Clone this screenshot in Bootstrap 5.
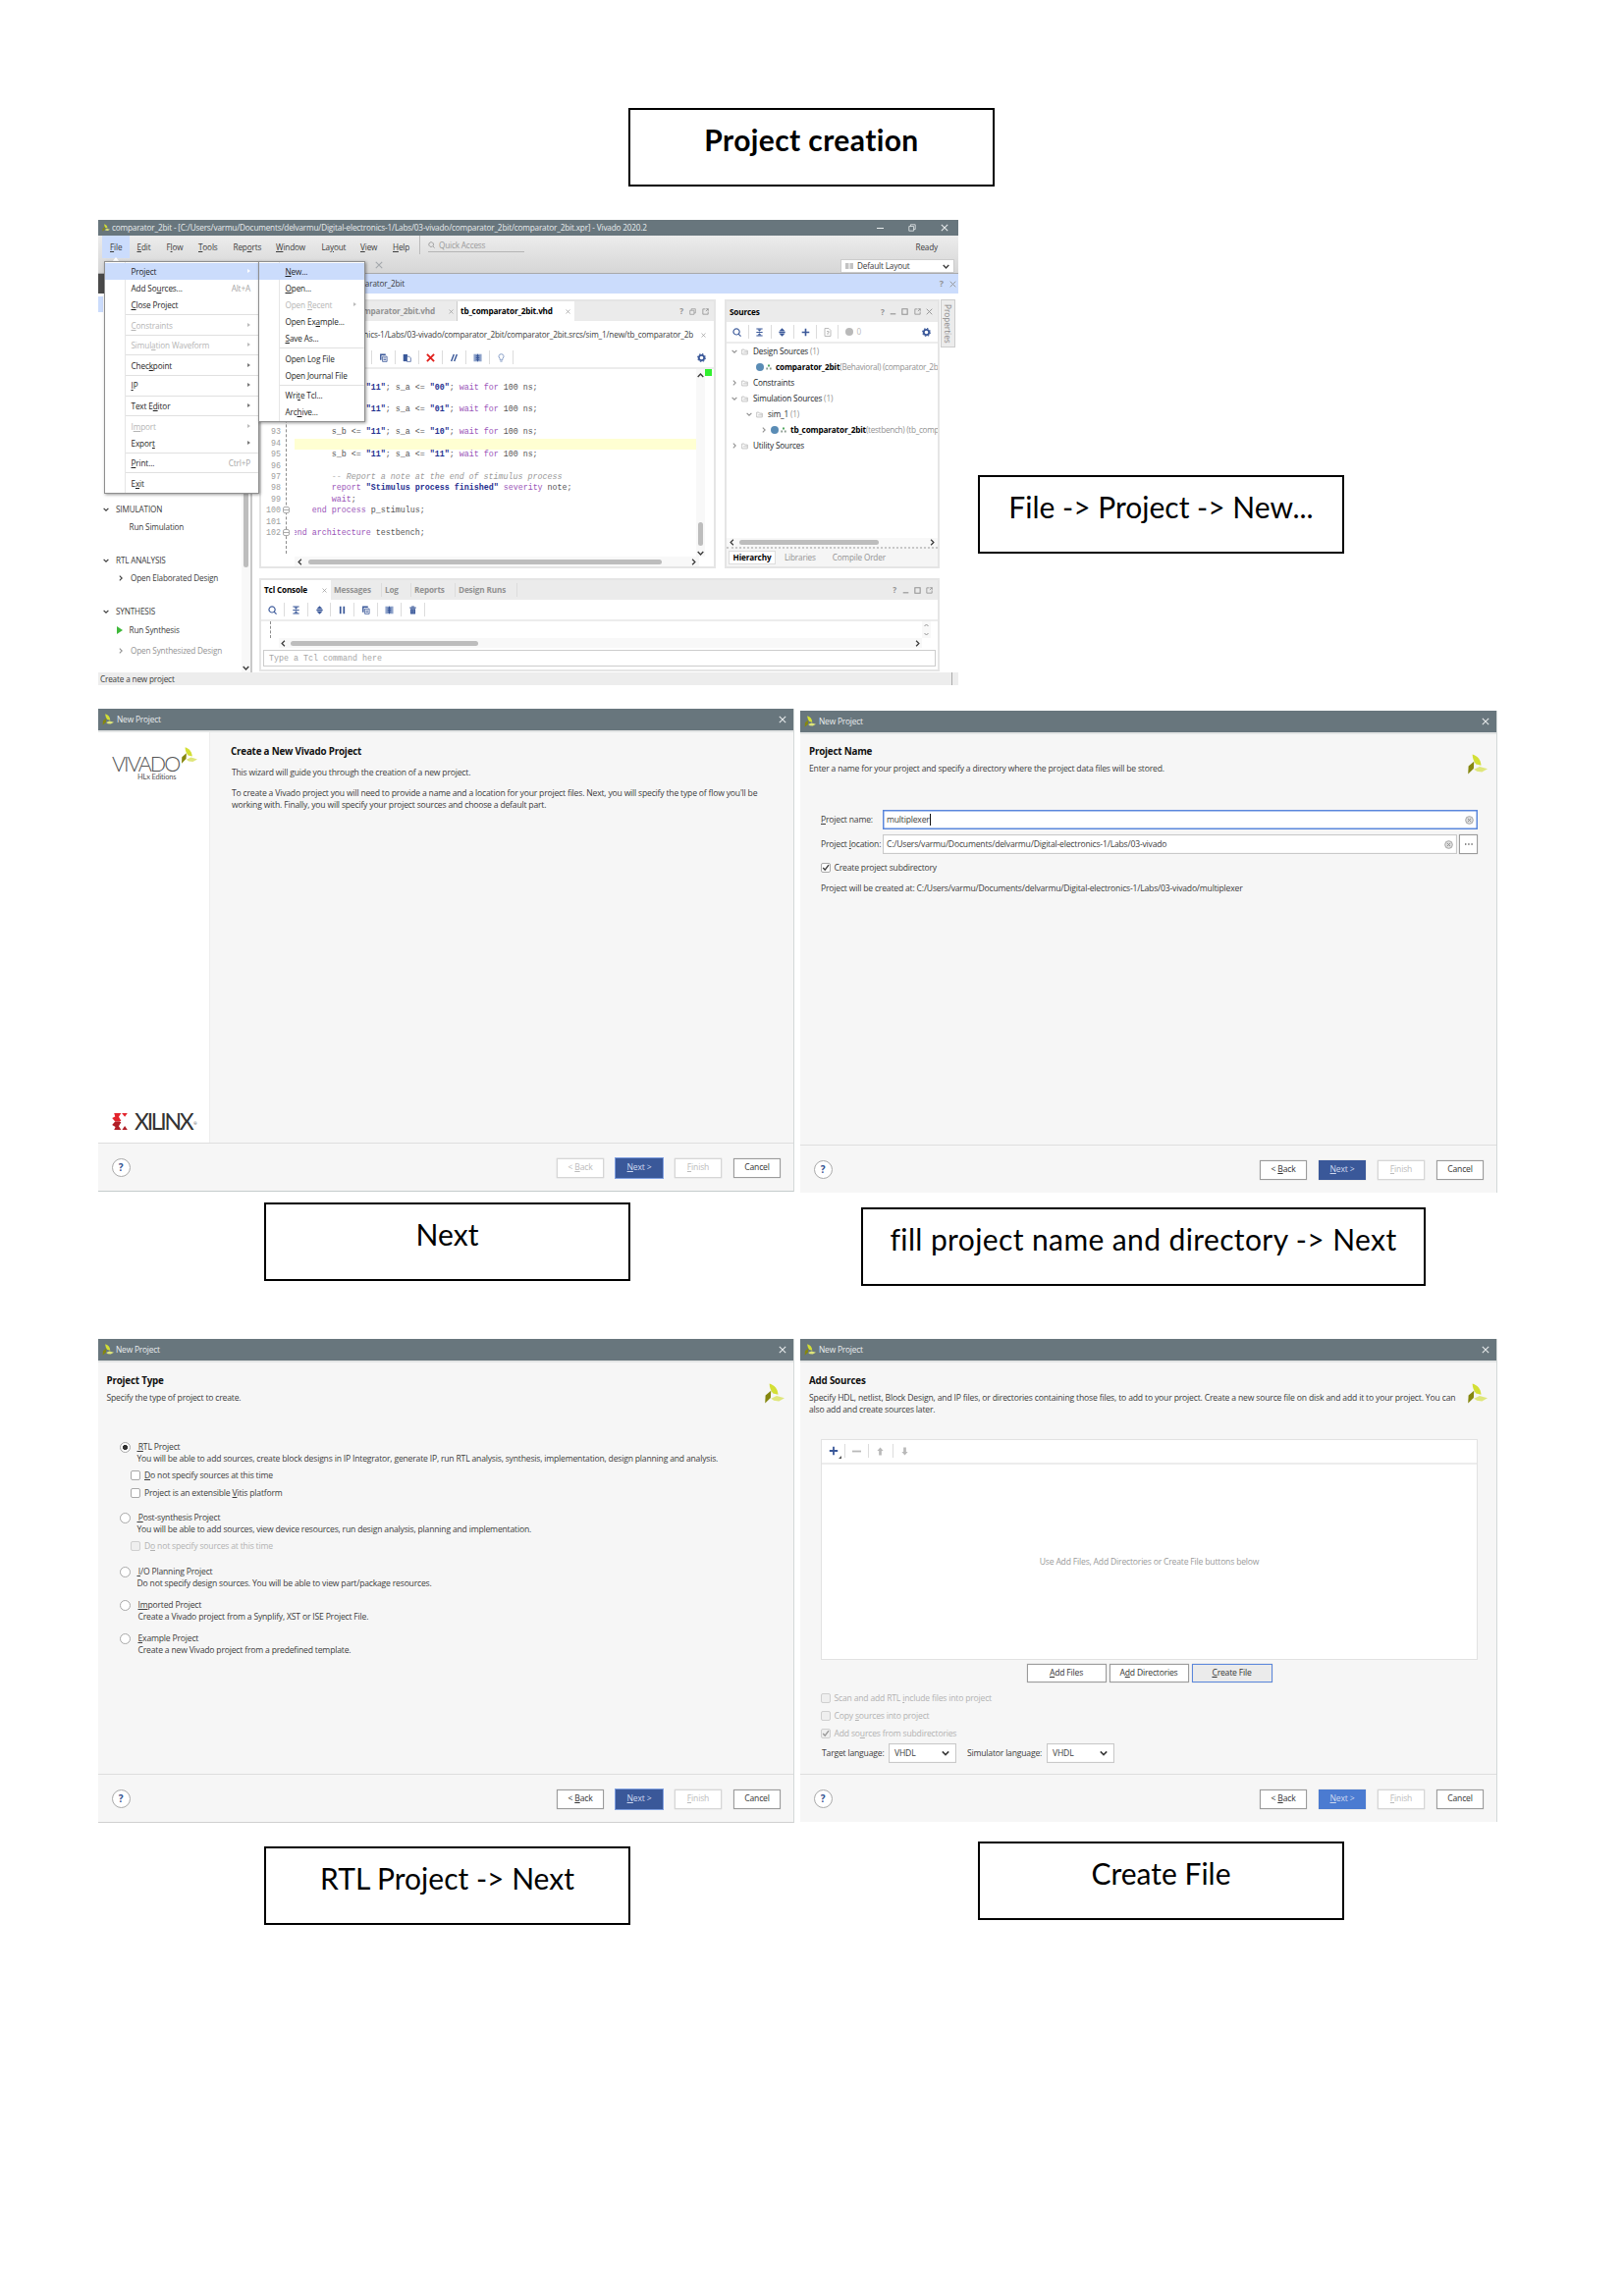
<!DOCTYPE html>
<html lang="en">
<head>
<meta charset="utf-8">
<title>Project creation</title>
<meta name="viewport" content="width=device-width, initial-scale=1">
<link rel="stylesheet" href="https://cdn.jsdelivr.net/npm/bootstrap@5.3.0/dist/css/bootstrap.min.css">
<style>
body{width:1654px;height:2339px;background:#fff;color:#3c3c3c;font-family:"Open Sans","Noto Sans",sans-serif;font-size:8.6px;line-height:12px;overflow:hidden}
svg{display:block;flex:none}
u{text-underline-offset:1px;text-decoration-thickness:.7px}
.sheet{padding:110px 0 0 100px}
.caption-box{border:2px solid #000;height:80px;width:373px;color:#000;font-family:Lato,"Liberation Sans",sans-serif;font-size:30px;line-height:34px;padding-top:13px;text-align:center;white-space:nowrap;font-variant-ligatures:none}
.caption-box.wide-set{letter-spacing:.39px}
.ttl{background:#68767d;color:#e9eced;flex:none}
/* main window */
.ide{width:876px;height:474px;background:#fff;font-size:8.2px;letter-spacing:-.16px;white-space:nowrap;overflow:hidden}
.ide .ttl{height:16px;padding:0 10px 0 4px}
.menubar{height:39px;background:linear-gradient(#ececec,#d6d6d6);border-bottom:1px solid #a9a9a9;flex:none}
.menubar .it{height:23px;line-height:23px;flex:none}
.quick{border-bottom:1px solid #b5b5b5;width:98px;height:14px;color:#9a9a9a}
.combo{background:#fff;border:1px solid #ccc}
.crumb{height:20px;background:#cbdcfc;flex:none}
.flow{width:157px;border-right:2px solid #c9c9c9;flex:none}
.flow .ln{height:12px}
.sb{background:#f8f8f8;flex:none}
.thumb{background:#bdbdbd;border-radius:3px}
.pane{border:2px solid #e5e5e5;background:#fff;overflow:hidden;flex:none}
.pane .hd{background:#ebebeb;flex:none}
.gr{color:#929292}
.tb{border-bottom:2px solid #ececec;flex:none}
.vs{width:1px;height:14px;background:#dcdcdc;flex:none}
.code{font-family:"Liberation Mono",monospace;font-size:8.33px;line-height:11.43px;letter-spacing:0;color:#555;white-space:pre}
.code i{color:#9a9a9a}.code b{color:#1f2f8f}.code s{color:#9a55b8;text-decoration:none}
.code.no{color:#9d9d9d;text-align:right;width:20px;flex:none}
.code .cur{background:#ffffd2}
.fold{width:1px;border-left:1px dashed #8c8c8c;flex:none}
.fold span{position:absolute;left:-4px;width:7px;height:7px;border:1px solid #aaa;border-radius:2px;background:linear-gradient(#fff 2px,#aaa 2px 3px,#fff 3px)}
.pop{position:absolute;background:linear-gradient(90deg,#fff 20px,#e6e6e6 20px 21px,#fff 21px);border:1px solid #8f8f8f;box-shadow:1px 1px 3px rgba(0,0,0,.4);color:#1e1e1e;padding-top:1px;letter-spacing:-.13px}
.pop div{height:17px;line-height:17px;padding-left:26.5px;padding-right:8px}
.pop div.sp{border-top:1px solid #e0e0e0;height:1px;margin:1.3px 0 1.3px 21px;padding:0}
.pop .on{background:#cbdcfc}.pop .off{color:#b5b5b5}
.pop em{font-style:normal;color:#a5a5a5;float:right}
.ar::after{content:"";float:right;margin-top:6px;border-left:3px solid #777;border-top:2.2px solid transparent;border-bottom:2.2px solid transparent}
.off.ar::after{border-left-color:#bbb}.on.ar::after{border-left-color:#fff}
.tree>div{height:16px}
.stat{height:13px;background:#ededed;flex:none;line-height:13px}
.side-tab{writing-mode:vertical-rl;background:#ececec;border:1px solid #ccc;width:15px;height:49px;line-height:13px;color:#888;text-align:center;letter-spacing:0;flex:none}
/* wizard windows */
.wiz{width:709px;background:#f6f6f6;white-space:nowrap;border-right:1px solid #d3d8d8;letter-spacing:-.19px}
.wiz .ttl{height:22px;padding:0 7px 0 4px;font-size:8.4px}
.wiz .rim{height:2px;background:#e3e5e5;flex:none}
.wiz h6{font-size:9.8px;line-height:12px;font-weight:700;color:#111;margin:0;letter-spacing:-.2px}
.foot{height:49px;border-top:1px solid #dedede;padding:15px 13px 0 13.5px;flex:none}
.hlp{width:19px;height:19px;border:1px solid #aaa;border-radius:50%;background:#fff;color:#34518f;font-weight:700;font-size:10px;line-height:17px;text-align:center}
.bt{width:48px;height:19.5px;border:1px solid #9b9b9b;background:#fff;color:#333;text-align:center;line-height:17.5px;box-shadow:0 0 1px #bbb}
.bt.dis{border-color:#d6d6d6;color:#bbb}
.bt.pri{background:#3a5899;border-color:#3a5899;color:#cfd9f0}
.bt.pri.lit{background:#4b7bd1;border-color:#4b7bd1}
.bt.foc{outline:1.5px solid #7f9fe0;outline-offset:0}
.inp{border:1px solid #c9c9c9;background:#fff;height:20px;padding:0 3px;box-shadow:inset 0 0 1px #ccc}
.inp.foc{border:1px solid #5b87dc;box-shadow:inset 0 0 0 .5px #5b87dc}
.cb{width:10px;height:10px;border:1px solid #a8a8a8;border-radius:2px;background:#fff;flex:none}
.cb.dis{border-color:#cfcfcf;background:#efefef}
.rd{width:11px;height:11px;border:1px solid #a8a8a8;border-radius:50%;background:#fff;flex:none;margin-top:1px}
.rd.sel{background:radial-gradient(circle,#333 0 2.3px,#fff 2.9px)}
.dis{color:#b2b2b2}
.brand{font-family:Lato,"Open Sans",sans-serif;font-weight:300;color:#555}
</style>
</head>
<body>
<svg width="0" height="0" class="position-absolute">
<symbol id="leaf" viewBox="0 0 52 50"><path fill="#d3df35" d="M14 0C28 5 34 12 36 28L23 25C17 17 14 10 14 0Z"/><path fill="#85870f" d="M4 30L18 18 17 36 3 50Z"/><path fill="#dfe67b" d="M18 38L32 31 52 37 38 45 25 43Z"/></symbol>
<symbol id="x" viewBox="0 0 10 10"><path d="M1 1L9 9M9 1L1 9" stroke="currentColor" fill="none" stroke-width="1.3"/></symbol>
<symbol id="xb" viewBox="0 0 10 10"><path d="M1 1L9 9M9 1L1 9" stroke="#e0201c" fill="none" stroke-width="2.1"/></symbol>
<symbol id="cd" viewBox="0 0 10 10"><path d="M1 3L5 7 9 3" stroke="currentColor" fill="none" stroke-width="2"/></symbol>
<symbol id="cu" viewBox="0 0 10 10"><path d="M1 7L5 3 9 7" stroke="currentColor" fill="none" stroke-width="2"/></symbol>
<symbol id="cr" viewBox="0 0 10 10"><path d="M3 1L7 5 3 9" stroke="currentColor" fill="none" stroke-width="1.8"/></symbol>
<symbol id="cl" viewBox="0 0 10 10"><path d="M7 1L3 5 7 9" stroke="currentColor" fill="none" stroke-width="1.8"/></symbol>
<symbol id="mag" viewBox="0 0 10 10"><path d="M7 7L9.5 9.5M4.5 1a3.4 3.4 0 1 0 .01 0Z" stroke="currentColor" fill="none" stroke-width="1.3"/></symbol>
<symbol id="coll" viewBox="0 0 10 10"><path d="M1.500 .5H8.500V1.800H1.500ZM1.500 4.400H8.500V5.600H1.500ZM1.500 8.200H8.500V9.500H1.500ZM3 2H7L5 4.200ZM3 8H7L5 5.800Z" fill="currentColor"/></symbol>
<symbol id="exp" viewBox="0 0 10 10"><path d="M5 .3L8.500 3.800H1.500ZM5 9.700L8.500 6.200H1.500ZM1.500 4.400H8.500V5.600H1.500Z" fill="currentColor"/></symbol>
<symbol id="plus" viewBox="0 0 10 10"><path d="M5 .8V9.200M.8 5H9.200" stroke="currentColor" stroke-width="1.8"/></symbol>
<symbol id="gear" viewBox="0 0 10 10"><circle cx="5" cy="5" r="3" fill="none" stroke="currentColor" stroke-width="2"/><circle cx="5" cy="5" r="4.300" fill="none" stroke="currentColor" stroke-width="1.200" stroke-dasharray="1.700 1.680"/></symbol>
<symbol id="copy" viewBox="0 0 10 10"><path d="M2 7.500V1.300H7.500" fill="none" stroke="currentColor" stroke-width="1.600"/><path d="M4 3.500H9V9.300H4ZM5 5.500H8M5 7.300H8" fill="none" stroke="currentColor" stroke-width=".9"/></symbol>
<symbol id="paste" viewBox="0 0 10 10"><path d="M.8 1H5.500V9H.8Z" fill="currentColor"/><path d="M5 3.500H7.500L9.300 5.300V9.300H5Z" fill="#fff" stroke="currentColor" stroke-width=".8"/></symbol>
<symbol id="cols" viewBox="0 0 10 10"><path d="M.5 .8H9.500V9.200H.5Z" fill="#8ea3ca"/><path d="M5 .8V9.200M3 3H7M3 7H7M3 5H7" stroke="#3a5899" stroke-width="1.200"/></symbol>
<symbol id="pause" viewBox="0 0 10 10"><path d="M3 .8V9.200M7 .8V9.200" stroke="currentColor" stroke-width="1.900"/></symbol>
<symbol id="bin" viewBox="0 0 10 10"><path d="M1.500 1.800H8.500V3H1.500ZM3.500 .6H6.500V1.500H3.500ZM2.200 3.600H7.800V9.500H2.200Z" fill="currentColor"/><path d="M4 4.500V8.500M6 4.500V8.500" stroke="#8fa3cb" stroke-width=".7"/></symbol>
<symbol id="bulb" viewBox="0 0 10 10"><path d="M5 .8a2.700 2.700 0 0 1 1.500 5V7.500H3.500V5.800A2.700 2.700 0 0 1 5 .8ZM3.800 9H6.200" fill="none" stroke="#7d95c2" stroke-width="1"/></symbol>
<symbol id="sl" viewBox="0 0 10 10"><path d="M1.800 9L4.800 1M5.200 9L8.200 1" stroke="currentColor" stroke-width="1.600"/></symbol>
<symbol id="sq" viewBox="0 0 10 10"><path d="M1.200 1.200H8.800V8.800H1.200Z" fill="none" stroke="currentColor" stroke-width="1.500"/></symbol>
<symbol id="fl" viewBox="0 0 10 10"><path d="M5 1.200H1.200V8.800H8.800V5M6 1H9V4M9 1L5.500 4.500" fill="none" stroke="currentColor" stroke-width="1.200"/></symbol>
<symbol id="rs" viewBox="0 0 10 10"><path d="M1 3.200H7V9H1ZM3 3V1H9V7H7" fill="none" stroke="currentColor" stroke-width="1"/></symbol>
<symbol id="mn" viewBox="0 0 10 10"><path d="M1 8.300H9" stroke="currentColor" stroke-width="1.600"/></symbol>
<symbol id="fo" viewBox="0 0 10 10"><path d="M1 8.500V1.500H4L5 3H9V8.500ZM3 5.500H9" fill="none" stroke="#b3b3b3" stroke-width="1.100"/></symbol>
<symbol id="hier" viewBox="0 0 10 10"><path d="M3.500 1H6.500V4H3.500Z" fill="#3f9e4f"/><path d="M.5 6H3.500V9H.5ZM6.500 6H9.500V9H6.500Z" fill="#8a9a8f"/></symbol>
<symbol id="clr" viewBox="0 0 10 10"><circle cx="5" cy="5" r="4.300" fill="#ddd" stroke="#999" stroke-width=".9"/><path d="M3.200 3.200L6.800 6.800M6.800 3.200L3.200 6.800" stroke="#888" stroke-width="1"/></symbol>
<symbol id="ck" viewBox="0 0 10 10"><path d="M1.500 5L4 7.800 8.800 1.500" fill="none" stroke="currentColor" stroke-width="1.700"/></symbol>
<symbol id="up" viewBox="0 0 10 10"><path d="M5 .5L8.500 4.500H6.500V9.500H3.500V4.500H1.500Z" fill="currentColor"/></symbol>
<symbol id="dn" viewBox="0 0 10 10"><path d="M5 9.500L8.500 5.500H6.500V.5H3.500V5.500H1.500Z" fill="currentColor"/></symbol>
<symbol id="xil" viewBox="0 0 46 50"><path fill="#e3242c" d="M6 0H27L20 11 27 23 22 25H9L0 15 9 10Z"/><path fill="#b01e26" d="M9 25H22L27 27 20 39 27 50H6L10 41 0 35Z"/><path fill="#e3242c" d="M29 0H46L38 11Z"/><path fill="#b01e26" d="M30 50L38 38 46 50Z"/></symbol>
</svg>

<div class="sheet">
  <div class="caption-box wide-set fw-bold" style="margin-left:540px">Project creation</div>

  <div class="d-flex" style="margin-top:34px">
    <section class="ide d-flex flex-column position-relative">
      <div class="ttl d-flex align-items-center">
        <svg width="8" height="10"><use href="#leaf"/></svg>
        <span style="margin-left:2px">comparator_2bit - [C:/Users/varmu/Documents/delvarmu/Digital-electronics-1/Labs/03-vivado/comparator_2bit/comparator_2bit.xpr] - Vivado 2020.2</span>
        <div class="ms-auto d-flex align-items-center" style="gap:25px">
          <svg width="7" height="7"><path d="M0 3.500H7" stroke="#e9eced"/></svg>
          <svg width="8" height="8"><use href="#rs"/></svg>
          <svg width="8" height="8"><use href="#x"/></svg>
        </div>
      </div>
      <div class="menubar d-flex justify-content-between">
        <div class="d-flex">
          <div class="it" style="width:28px;margin-left:4px;padding-left:8px;background:#cbdcfc"><u>F</u>ile</div>
          <div class="it" style="width:30px;padding-left:7.500px"><u>E</u>dit</div>
          <div class="it" style="width:33px;padding-left:7.500px">F<u>l</u>ow</div>
          <div class="it" style="width:35px;padding-left:7px"><u>T</u>ools</div>
          <div class="it" style="width:44px;padding-left:7.500px">Rep<u>o</u>rts</div>
          <div class="it" style="width:46px;padding-left:7px"><u>W</u>indow</div>
          <div class="it" style="width:40px;padding-left:7.500px">La<u>y</u>out</div>
          <div class="it" style="width:33px;padding-left:7px"><u>V</u>iew</div>
          <div class="it" style="width:34px;padding-left:7px"><u>H</u>elp</div>
          <div style="width:1px;height:19px;background:#bbb"></div>
          <div class="d-flex flex-column" style="margin:3px 0 0 8px">
            <div class="quick d-flex align-items-center gap-1"><svg width="7" height="7"><use href="#mag"/></svg><span>Quick Access</span></div>
            <svg width="8" height="8" class="text-secondary opacity-50" style="margin:9px 0 0 -54px"><use href="#x"/></svg>
          </div>
        </div>
        <div class="d-flex flex-column align-items-end" style="padding-right:4px">
          <div style="height:24px;line-height:23px;padding-right:17px">Ready</div>
          <div class="combo d-flex align-items-center" style="width:116px;height:14px;padding:0 4px"><svg width="8" height="6"><path d="M0 1H8M0 3H8M0 5H8" stroke="#888" stroke-width="1.200" stroke-dasharray="3.500 1"/></svg><span style="margin-left:4px">Default Layout</span><svg width="7" height="7" class="ms-auto"><use href="#cd"/></svg></div>
        </div>
      </div>
      <div class="crumb d-flex align-items-center">
        <div style="width:6px;height:20px;background:#4a4a4a"></div>
        <span class="text-end" style="width:306px">arator_2bit</span>
        <span class="ms-auto gr fw-bold" style="font-size:9px">?</span><svg width="7" height="7" class="gr" style="margin:0 2px 0 6px"><use href="#x"/></svg>
      </div>
      <div class="d-flex" style="height:386px">
        <div class="flow d-flex justify-content-between">
          <div class="d-flex flex-column" style="padding-left:5px">
            <div style="width:5px;height:16px;margin:3px 0 0 -5px;background:#cbdcfc"></div>
            <div class="ln d-flex align-items-center" style="margin-top:194.500px"><svg width="6" height="6"><use href="#cd"/></svg><span style="margin-left:7px">SIMULATION</span></div>
            <div class="ln" style="margin:6.500px 0 0 26.500px">Run Simulation</div>
            <div class="ln d-flex align-items-center" style="margin-top:21.500px"><svg width="6" height="6"><use href="#cd"/></svg><span style="margin-left:7px">RTL ANALYSIS</span></div>
            <div class="ln d-flex align-items-center" style="margin:6.500px 0 0 15px"><svg width="6" height="6"><use href="#cr"/></svg><span style="margin-left:7px">Open Elaborated Design</span></div>
            <div class="ln d-flex align-items-center" style="margin-top:22px"><svg width="6" height="6"><use href="#cd"/></svg><span style="margin-left:7px">SYNTHESIS</span></div>
            <div class="ln d-flex align-items-center" style="margin:6.500px 0 0 14px"><svg width="6" height="8"><path d="M0 0L6 4 0 8Z" fill="#3fb93a"/></svg><span style="margin-left:6.500px">Run Synthesis</span></div>
            <div class="ln d-flex align-items-center gr" style="margin:9px 0 0 15px"><svg width="6" height="6"><use href="#cr"/></svg><span style="margin-left:7px">Open Synthesized Design</span></div>
          </div>
          <div class="sb d-flex flex-column align-items-center justify-content-between" style="width:9px"><div class="thumb" style="width:5px;height:279px"></div><svg width="7" height="7" style="margin-bottom:1px"><use href="#cd"/></svg></div>
        </div>
        <div style="padding:6px 0 0 7px">
          <div class="d-flex" style="gap:9px">
            <div class="pane d-flex flex-column" style="width:465px;height:274px">
              <div class="hd d-flex align-items-center fw-bold gr" style="height:20px">
                <span class="text-end" style="width:177px;margin-right:14px">mparator_2bit.vhd</span><svg width="5" height="5"><use href="#x"/></svg>
                <div class="bg-white d-flex align-items-center text-black" style="height:20px;width:120px;margin-left:3px;padding-left:3px;border-left:1px solid #ccc"><span>tb_comparator_2bit.vhd</span><svg width="5" height="5" class="gr ms-auto" style="margin-right:4px"><use href="#x"/></svg></div>
                <span class="ms-auto">?</span><svg width="7" height="7" style="margin:0 6px"><use href="#rs"/></svg><svg width="7" height="7" style="margin-right:5px"><use href="#fl"/></svg>
              </div>
              <div class="d-flex align-items-center justify-content-between" style="height:26px;padding:2px 8px 0 0"><span class="text-end" style="width:440px">nics-1/Labs/03-vivado/comparator_2bit/comparator_2bit.srcs/sim_1/new/tb_comparator_2b</span><svg width="5" height="5" class="gr"><use href="#x"/></svg></div>
              <div class="tb d-flex align-items-center" style="height:23px;color:#3a5899;padding:1px 8px 0 112px;gap:7px">
                <div class="vs"></div><svg width="9" height="9"><use href="#copy"/></svg><div class="vs"></div><svg width="9" height="9"><use href="#paste"/></svg><div class="vs"></div><svg width="9" height="9"><use href="#xb"/></svg><div class="vs"></div><svg width="9" height="9"><use href="#sl"/></svg><div class="vs"></div><svg width="9" height="9"><use href="#cols"/></svg><div class="vs"></div><svg width="9" height="9"><use href="#bulb"/></svg><div class="vs"></div>
                <svg width="9" height="9" class="ms-auto"><use href="#gear"/></svg>
              </div>
              <div class="d-flex" style="height:191px">
                <div class="code no" style="padding-top:13.500px"><br><br><br><br>93
94
95
96
97
98
99
100
101
102</div>
                <div class="fold position-relative" style="margin:2px 8px 0 5px;height:186px"><span style="top:138px"></span><span style="top:161px"></span></div>
                <div class="code overflow-hidden flex-shrink-0" style="height:191px;padding-top:13.500px;width:409px"><div style="margin-left:-2.300px;width:411.300px">               <b>"11"</b>; s_a &lt;= <b>"00"</b>; <s>wait for</s> 100 ns;

               <b>"11"</b>; s_a &lt;= <b>"01"</b>; <s>wait for</s> 100 ns;

        s_b &lt;= <b>"11"</b>; s_a &lt;= <b>"10"</b>; <s>wait for</s> 100 ns;
<div class="cur" style="height:11.430px"></div>        s_b &lt;= <b>"11"</b>; s_a &lt;= <b>"11"</b>; <s>wait for</s> 100 ns;

        <i>-- Report a note at the end of stimulus process</i>
        <s>report</s> <b>"Stimulus process finished"</b> <s>severity</s> note;
        <s>wait</s>;
    <s>end process</s> p_stimulus;

<s>end architecture</s> testbench;</div></div>
                <div class="sb d-flex flex-column align-items-center" style="width:9px;height:191px;padding-top:3px"><svg width="7" height="7"><use href="#cu"/></svg><div class="thumb mt-auto" style="width:5px;height:24px"></div><svg width="7" height="7" style="margin:4px 0 0"><use href="#cd"/></svg></div>
                <div style="width:7px;height:7px;background:#31f02f;flex:none"></div>
              </div>
              <div class="sb d-flex align-items-center" style="height:10px;margin-left:34px;width:412px;padding:0 2px"><svg width="7" height="7"><use href="#cl"/></svg><div class="thumb" style="width:360px;height:5px;margin-left:5px"></div><svg width="7" height="7" class="ms-auto"><use href="#cr"/></svg></div>
            </div>
            <div class="pane d-flex flex-column" style="width:219px;height:274px">
              <div class="hd d-flex align-items-center gr" style="height:21px;padding:0 5px 0 3px;gap:5.300px"><b class="text-black me-auto">Sources</b><b>?</b><svg width="7" height="7"><use href="#mn"/></svg><svg width="7" height="7"><use href="#sq"/></svg><svg width="7" height="7"><use href="#fl"/></svg><svg width="7" height="7"><use href="#x"/></svg></div>
              <div class="tb d-flex align-items-center" style="height:22px;color:#3a5899;padding:0 7px 0 6px;gap:6.600px"><svg width="9" height="9"><use href="#mag"/></svg><div class="vs"></div><svg width="9" height="9"><use href="#coll"/></svg><div class="vs"></div><svg width="9" height="9"><use href="#exp"/></svg><div class="vs"></div><svg width="9" height="9"><use href="#plus"/></svg><div class="vs"></div><svg width="8" height="9"><path d="M1 .5H5L7 2.500V8.500H1Z" fill="none" stroke="#bbb"/><path d="M3 3.500H5V5H4V7" fill="none" stroke="#bbb"/></svg><div class="vs"></div><svg width="8" height="8"><circle cx="4" cy="4" r="4" fill="#b9b9b9"/></svg><span style="color:#bbb;margin-left:-3px">0</span><svg width="9" height="9" class="ms-auto"><use href="#gear"/></svg></div>
              <div class="tree gr">
                <div class="d-flex align-items-center" style="padding-left:5px"><svg width="6" height="6"><use href="#cd"/></svg><svg width="7" height="7" style="margin:0 5px 0 4px"><use href="#fo"/></svg><span class="text-body">Design Sources</span>&nbsp;(1)</div>
                <div class="d-flex align-items-center" style="padding-left:30px"><svg width="8" height="8"><circle cx="4" cy="4" r="4" fill="#5a8cb5"/></svg><svg width="6" height="6" style="margin:0 4px 0 2px"><use href="#hier"/></svg><b class="text-black">comparator_2bit</b><span style="letter-spacing:-.3px">(Behavioral) (comparator_2b</span></div>
                <div class="d-flex align-items-center" style="padding-left:5px"><svg width="6" height="6"><use href="#cr"/></svg><svg width="7" height="7" style="margin:0 5px 0 4px"><use href="#fo"/></svg><span class="text-body">Constraints</span></div>
                <div class="d-flex align-items-center" style="padding-left:5px"><svg width="6" height="6"><use href="#cd"/></svg><svg width="7" height="7" style="margin:0 5px 0 4px"><use href="#fo"/></svg><span class="text-body">Simulation Sources</span>&nbsp;(1)</div>
                <div class="d-flex align-items-center" style="padding-left:20px"><svg width="6" height="6"><use href="#cd"/></svg><svg width="7" height="7" style="margin:0 5px 0 4px"><use href="#fo"/></svg><span class="text-body">sim_1</span>&nbsp;(1)</div>
                <div class="d-flex align-items-center" style="padding-left:35px"><svg width="6" height="6"><use href="#cr"/></svg><svg width="8" height="8" style="margin-left:4px"><circle cx="4" cy="4" r="4" fill="#5a8cb5"/></svg><svg width="6" height="6" style="margin:0 4px 0 2px"><use href="#hier"/></svg><b class="text-black">tb_comparator_2bit</b><span style="letter-spacing:-.3px">(testbench) (tb_comp</span></div>
                <div class="d-flex align-items-center" style="padding-left:5px"><svg width="6" height="6"><use href="#cr"/></svg><svg width="7" height="7" style="margin:0 5px 0 4px"><use href="#fo"/></svg><span class="text-body">Utility Sources</span></div>
              </div>
              <div class="sb d-flex align-items-center mt-auto" style="height:9px;padding:0 2px"><svg width="7" height="7"><use href="#cl"/></svg><div class="thumb" style="width:142px;height:5px;margin-left:4px"></div><svg width="7" height="7" class="ms-auto"><use href="#cr"/></svg></div>
              <div class="d-flex align-items-center gr" style="height:20px;background:#f5f5f5;border-top:2px dotted #c8c8c8;padding-left:2px"><b class="bg-white text-black text-center" style="border:1px solid #ddd;width:48px;height:14px;line-height:12px">Hierarchy</b><span style="margin-left:9px">Libraries</span><span style="margin-left:17px">Compile Order</span></div>
            </div>
            <div class="side-tab" style="margin-left:-8px">Properties</div>
          </div>
          <div class="pane d-flex flex-column" style="width:693px;height:95px;margin-top:10px">
            <div class="hd d-flex align-items-center fw-bold gr" style="height:20px"><div class="bg-white d-flex align-items-center text-black" style="height:20px;width:71px;padding-left:3px">Tcl Console<svg width="5" height="5" class="gr ms-auto" style="margin-right:4px"><use href="#x"/></svg></div><span style="margin-left:3px;width:48px">Messages</span><span class="vs"></span><span style="margin-left:3px;width:26px">Log</span><span class="vs"></span><span style="margin-left:3px;width:41px">Reports</span><span class="vs"></span><span style="margin-left:3px;width:59px">Design Runs</span><span class="vs"></span><span class="ms-auto">?</span><svg width="7" height="7" style="margin:0 5px 0 6px"><use href="#mn"/></svg><svg width="7" height="7" style="margin-right:5px"><use href="#sq"/></svg><svg width="7" height="7" style="margin-right:5px"><use href="#fl"/></svg></div>
            <div class="tb d-flex align-items-center" style="height:22px;color:#3a5899;padding-left:7px;gap:6.900px"><svg width="9" height="9"><use href="#mag"/></svg><div class="vs"></div><svg width="9" height="9"><use href="#coll"/></svg><div class="vs"></div><svg width="9" height="9"><use href="#exp"/></svg><div class="vs"></div><svg width="9" height="9"><use href="#pause"/></svg><div class="vs"></div><svg width="9" height="9"><use href="#copy"/></svg><div class="vs"></div><svg width="9" height="9"><use href="#cols"/></svg><div class="vs"></div><svg width="9" height="9"><use href="#bin"/></svg><div class="vs"></div></div>
            <div class="d-flex justify-content-between" style="height:17px;padding:0 7px 0 9px"><div class="fold" style="height:17px"></div><div class="sb d-flex flex-column justify-content-around align-items-center" style="width:9px"><svg width="5" height="6" class="gr"><use href="#cu"/></svg><svg width="5" height="6" class="gr"><use href="#cd"/></svg></div></div>
            <div class="sb d-flex align-items-center" style="height:10px;margin:0 16px 0 18px;padding:0 1px"><svg width="7" height="7"><use href="#cl"/></svg><div class="thumb" style="width:191px;height:5px;margin-left:4px"></div><svg width="7" height="7" class="ms-auto"><use href="#cr"/></svg></div>
            <div class="code" style="border:1px solid #ccc;height:17px;line-height:16px;margin:2px 2px 0;padding-left:5px;color:#a5a5a5">Type a Tcl command here</div>
          </div>
        </div>
      </div>
      <div class="stat" style="padding-left:2px"><span class="d-block" style="border-right:1px solid #aaa;width:868px">Create a new project</span></div>

      <svg width="8" height="5" class="position-absolute" style="left:14px;top:38px"><path d="M4 0L8 5H0Z" fill="#fff"/></svg>
      <div class="pop" style="left:6px;top:42px;width:158px;height:237px">
        <div class="on ar">Project</div><div>Add So<u>u</u>rces...<em>Alt+A</em></div><div><u>C</u>lose Project</div><div class="sp"></div>
        <div class="off ar"><u>C</u>onstraints</div><div class="sp"></div><div class="off ar">Simul<u>a</u>tion Waveform</div><div class="sp"></div>
        <div class="ar">Chec<u>k</u>point</div><div class="sp"></div><div class="ar"><u>I</u>P</div><div class="sp"></div><div class="ar">Text E<u>d</u>itor</div><div class="sp"></div>
        <div class="off ar">I<u>m</u>port</div><div class="ar">Expor<u>t</u></div><div class="sp"></div><div><u>P</u>rint...<em>Ctrl+P</em></div><div class="sp"></div><div>E<u>x</u>it</div>
      </div>
      <div class="pop" style="left:163px;top:42px;width:109px;height:164px">
        <div class="on"><u>N</u>ew...</div><div><u>O</u>pen...</div><div class="off ar">Open <u>R</u>ecent</div><div>Open Ex<u>a</u>mple...</div><div><u>S</u>ave As...</div><div class="sp"></div>
        <div>Open Lo<u>g</u> File</div><div>Open <u>J</u>ournal File</div><div class="sp"></div><div>Wri<u>t</u>e Tcl...</div><div>Arc<u>h</u>ive...</div>
      </div>
    </section>
    <div class="caption-box" style="margin:260px 0 0 20px">File -&gt; Project -&gt; New...</div>
  </div>

  <div class="d-flex align-items-start" style="gap:6px;margin-top:24px">
    <div>
      <section class="wiz d-flex flex-column" style="height:492px;border-bottom:1px solid #c4cccc">
        <div class="ttl d-flex align-items-center"><svg width="12" height="12"><use href="#leaf"/></svg><span style="margin-left:3px">New Project</span><svg width="8" height="8" class="ms-auto"><use href="#x"/></svg></div><div class="rim"></div>
        <div class="d-flex flex-grow-1">
          <div class="bg-white d-flex flex-column justify-content-between" style="width:114px;border-right:1px solid #eee;padding:15px 0 13px 14px">
            <div><div class="d-flex align-items-start brand"><span style="font-size:21.500px;line-height:18px;letter-spacing:-2px;padding-top:8px">VIVADO</span><svg width="17" height="17" style="margin-left:2px"><use href="#leaf"/></svg></div><div class="brand" style="font-size:7.500px;line-height:8px;padding-left:26px;margin-top:1px;font-weight:400">HLx Editions</div></div>
            <div class="d-flex align-items-center"><svg width="16" height="17"><use href="#xil"/></svg><span style="font-family:Lato,sans-serif;font-size:23px;line-height:18px;letter-spacing:-2.300px;margin-left:7px;color:#333">XILINX</span><span style="font-size:4px;align-self:end;margin-left:2px">®</span></div>
          </div>
          <div style="padding:14px 0 0 21px"><h6>Create a New Vivado Project</h6><div style="margin:9px 0 0 1px">This wizard will guide you through the creation of a new project.</div><div style="margin:8.500px 0 0 1px">To create a Vivado project you will need to provide a name and a location for your project files. Next, you will specify the type of flow you'll be<br>working with. Finally, you will specify your project sources and choose a default part.</div></div>
        </div>
        <div class="foot d-flex"><div class="hlp">?</div><div class="d-flex ms-auto" style="gap:12px"><div class="bt dis">&lt; <u>B</u>ack</div><div class="bt pri foc"><u>N</u>ext &gt;</div><div class="bt dis"><u>F</u>inish</div><div class="bt">Cancel</div></div></div>
      </section>
      <div class="caption-box" style="margin:11px 0 0 169px">Next</div>
      <section class="wiz d-flex flex-column" style="height:493px;margin-top:59px;border-bottom:1px solid #d0d0d0">
        <div class="ttl d-flex align-items-center"><svg width="12" height="12"><use href="#leaf"/></svg><span style="margin-left:2px">New Project</span><svg width="8" height="8" class="ms-auto"><use href="#x"/></svg></div><div class="rim"></div>
        <div class="flex-grow-1 d-flex justify-content-between" style="padding:12.500px 9px 0 8.500px">
          <div><h6 style="margin-bottom:5px">Project Type</h6>Specify the type of project to create.
            <div style="padding:38px 0 0 13px">
              <div class="d-flex" style="height:72.500px"><div class="rd sel"></div><div style="padding-left:7px"><u>&thinsp;R</u>TL Project<br>You will be able to add sources, create block designs in IP Integrator, generate IP, run RTL analysis, synthesis, implementation, design planning and analysis.<div class="d-flex align-items-center" style="margin:5px 0 0 -7px;gap:4.500px"><div class="cb"></div><span><u>D</u>o not specify sources at this time</span></div><div class="d-flex align-items-center" style="margin:6px 0 0 -7px;gap:4.500px"><div class="cb"></div><span>Project is an extensible <u>V</u>itis platform</span></div></div></div>
              <div class="d-flex" style="height:54.500px"><div class="rd"></div><div style="padding-left:7px"><u>&thinsp;P</u>ost-synthesis Project<br>You will be able to add sources, view device resources, run design analysis, planning and implementation.<div class="d-flex align-items-center dis" style="margin:5px 0 0 -7px;gap:4.500px"><div class="cb dis"></div><span>D<u>o</u> not specify sources at this time</span></div></div></div>
              <div class="d-flex" style="height:34px"><div class="rd"></div><div style="padding-left:7px"><u>&thinsp;I</u>/O Planning Project<br>Do not specify design sources. You will be able to view part/package resources.</div></div>
              <div class="d-flex" style="height:34px"><div class="rd"></div><div style="padding-left:8px"><u>Im</u>ported Project<br>Create a Vivado project from a Synplify, XST or ISE Project File.</div></div>
              <div class="d-flex"><div class="rd"></div><div style="padding-left:8px"><u>E</u>xample Project<br>Create a new Vivado project from a predefined template.</div></div>
            </div>
          </div>
          <svg width="21" height="21" style="margin-top:8px"><use href="#leaf"/></svg>
        </div>
        <div class="foot d-flex"><div class="hlp">?</div><div class="d-flex ms-auto" style="gap:12px"><div class="bt">&lt; <u>B</u>ack</div><div class="bt pri foc"><u>N</u>ext &gt;</div><div class="bt dis"><u>F</u>inish</div><div class="bt">Cancel</div></div></div>
      </section>
      <div class="caption-box" style="margin:24px 0 0 169px">RTL Project -&gt; Next</div>
    </div>

    <div>
      <section class="wiz d-flex flex-column" style="height:491px;margin-top:2px;width:710px">
        <div class="ttl d-flex align-items-center"><svg width="12" height="12"><use href="#leaf"/></svg><span style="margin-left:3px">New Project</span><svg width="8" height="8" class="ms-auto"><use href="#x"/></svg></div><div class="rim"></div>
        <div class="flex-grow-1" style="padding:12px 9px 0 9px">
          <div class="d-flex justify-content-between"><div><h6 style="margin-bottom:5px">Project Name</h6>Enter a name for your project and specify a directory where the project data files will be stored.</div><svg width="21" height="21" style="margin-top:8px"><use href="#leaf"/></svg></div>
          <div style="padding:36px 10px 0 12px">
            <div class="d-flex align-items-center"><span style="width:63px"><u>P</u>roject name:</span><div class="inp foc flex-grow-1 d-flex align-items-center"><span style="border-right:1px solid #111">multiplexer</span><svg width="9" height="9" class="ms-auto"><use href="#clr"/></svg></div></div>
            <div class="d-flex align-items-center" style="margin-top:5px"><span style="width:63px">Project <u>l</u>ocation:</span><div class="inp flex-grow-1 d-flex align-items-center"><span>C:/Users/varmu/Documents/delvarmu/Digital-electronics-1/Labs/03-vivado</span><svg width="9" height="9" class="ms-auto"><use href="#clr"/></svg></div><div class="bt d-flex align-items-center justify-content-center" style="width:19px;margin-left:2px"><svg width="8" height="2"><path d="M0 1H8" stroke="#666" stroke-width="1.300" stroke-dasharray="1.400 1.800"/></svg></div></div>
            <div class="d-flex align-items-center" style="margin-top:8px;gap:3.500px"><div class="cb"><svg width="8" height="8"><use href="#ck"/></svg></div>Create project subdirectory</div>
            <div style="margin-top:9px">Project will be created at: C:/Users/varmu/Documents/delvarmu/Digital-electronics-1/Labs/03-vivado/multiplexer</div>
          </div>
        </div>
        <div class="foot d-flex"><div class="hlp">?</div><div class="d-flex ms-auto" style="gap:12px"><div class="bt">&lt; <u>B</u>ack</div><div class="bt pri"><u>N</u>ext &gt;</div><div class="bt dis"><u>F</u>inish</div><div class="bt">Cancel</div></div></div>
      </section>
      <div class="caption-box wide-set" style="margin:15px 0 0 62px;width:575px">fill project name and directory -&gt; Next</div>
      <section class="wiz d-flex flex-column" style="height:492px;margin-top:54px;width:710px">
        <div class="ttl d-flex align-items-center"><svg width="12" height="12"><use href="#leaf"/></svg><span style="margin-left:3px">New Project</span><svg width="8" height="8" class="ms-auto"><use href="#x"/></svg></div><div class="rim"></div>
        <div class="flex-grow-1" style="padding:12.500px 9px 0 9px">
          <div class="d-flex justify-content-between"><div><h6 style="margin-bottom:5px">Add Sources</h6><span style="letter-spacing:-.165px">Specify HDL, netlist, Block Design, and IP files, or directories containing those files, to add to your project. Create a new source file on disk and add it to your project. You can</span><br>also add and create sources later.</div><svg width="21" height="21" style="margin-top:8px"><use href="#leaf"/></svg></div>
          <div style="padding:24px 10px 0 12px">
            <div class="bg-white d-flex flex-column" style="height:225px;border:1.500px solid #e2e2e2">
              <div class="tb d-flex align-items-center" style="height:25px;padding-left:7px;gap:7.300px;color:#b9b9b9"><svg width="10" height="10" style="color:#3a5899"><use href="#plus"/></svg><svg width="3" height="3" style="margin:12px -5px 0 -7px"><path d="M3 0V3H0Z" fill="#555"/></svg><div class="vs"></div><svg width="9" height="9"><path d="M0 4.500H9" stroke="currentColor" stroke-width="1.800"/></svg><div class="vs"></div><svg width="9" height="9"><use href="#up"/></svg><div class="vs"></div><svg width="9" height="9"><use href="#dn"/></svg></div>
              <div class="flex-grow-1 d-flex align-items-center justify-content-center" style="color:#999">Use Add Files, Add Directories or Create File buttons below</div>
            </div>
            <div class="d-flex justify-content-center" style="gap:3px;margin-top:4px"><div class="bt" style="width:81px"><u>A</u>dd Files</div><div class="bt" style="width:81px">A<u>d</u>d Directories</div><div class="bt" style="width:82px;background:#ebebeb;border-color:#5b87dc"><u>C</u>reate File</div></div>
            <div class="d-flex align-items-center dis" style="margin-top:9.500px;gap:3.500px"><div class="cb dis"></div><span>Scan and add RTL <u>i</u>nclude files into project</span></div>
            <div class="d-flex align-items-center dis" style="margin-top:6px;gap:3.500px"><div class="cb dis"></div><span>Copy <u>s</u>ources into project</span></div>
            <div class="d-flex align-items-center dis" style="margin-top:6px;gap:3.500px"><div class="cb dis"><svg width="8" height="8" style="color:#999"><use href="#ck"/></svg></div><span>Add so<u>u</u>rces from subdirectories</span></div>
            <div class="d-flex align-items-center" style="margin-top:4px"><span style="width:69px;padding-left:1px">Target language:</span><div class="inp d-flex align-items-center" style="width:69px;padding:0 6px 0 5px">VHDL<svg width="8" height="8" class="ms-auto"><use href="#cd"/></svg></div><span style="width:81px;margin-left:11px">Simulator language:</span><div class="inp d-flex align-items-center" style="width:69px;padding:0 6px 0 5px">VHDL<svg width="8" height="8" class="ms-auto"><use href="#cd"/></svg></div></div>
          </div>
        </div>
        <div class="foot d-flex"><div class="hlp">?</div><div class="d-flex ms-auto" style="gap:12px"><div class="bt">&lt; <u>B</u>ack</div><div class="bt pri lit"><u>N</u>ext &gt;</div><div class="bt dis"><u>F</u>inish</div><div class="bt">Cancel</div></div></div>
      </section>
      <div class="caption-box" style="margin:20px 0 0 181px">Create File</div>
    </div>
  </div>
</div>
<script src="https://cdn.jsdelivr.net/npm/bootstrap@5.3.0/dist/js/bootstrap.bundle.min.js"></script>
</body>
</html>
